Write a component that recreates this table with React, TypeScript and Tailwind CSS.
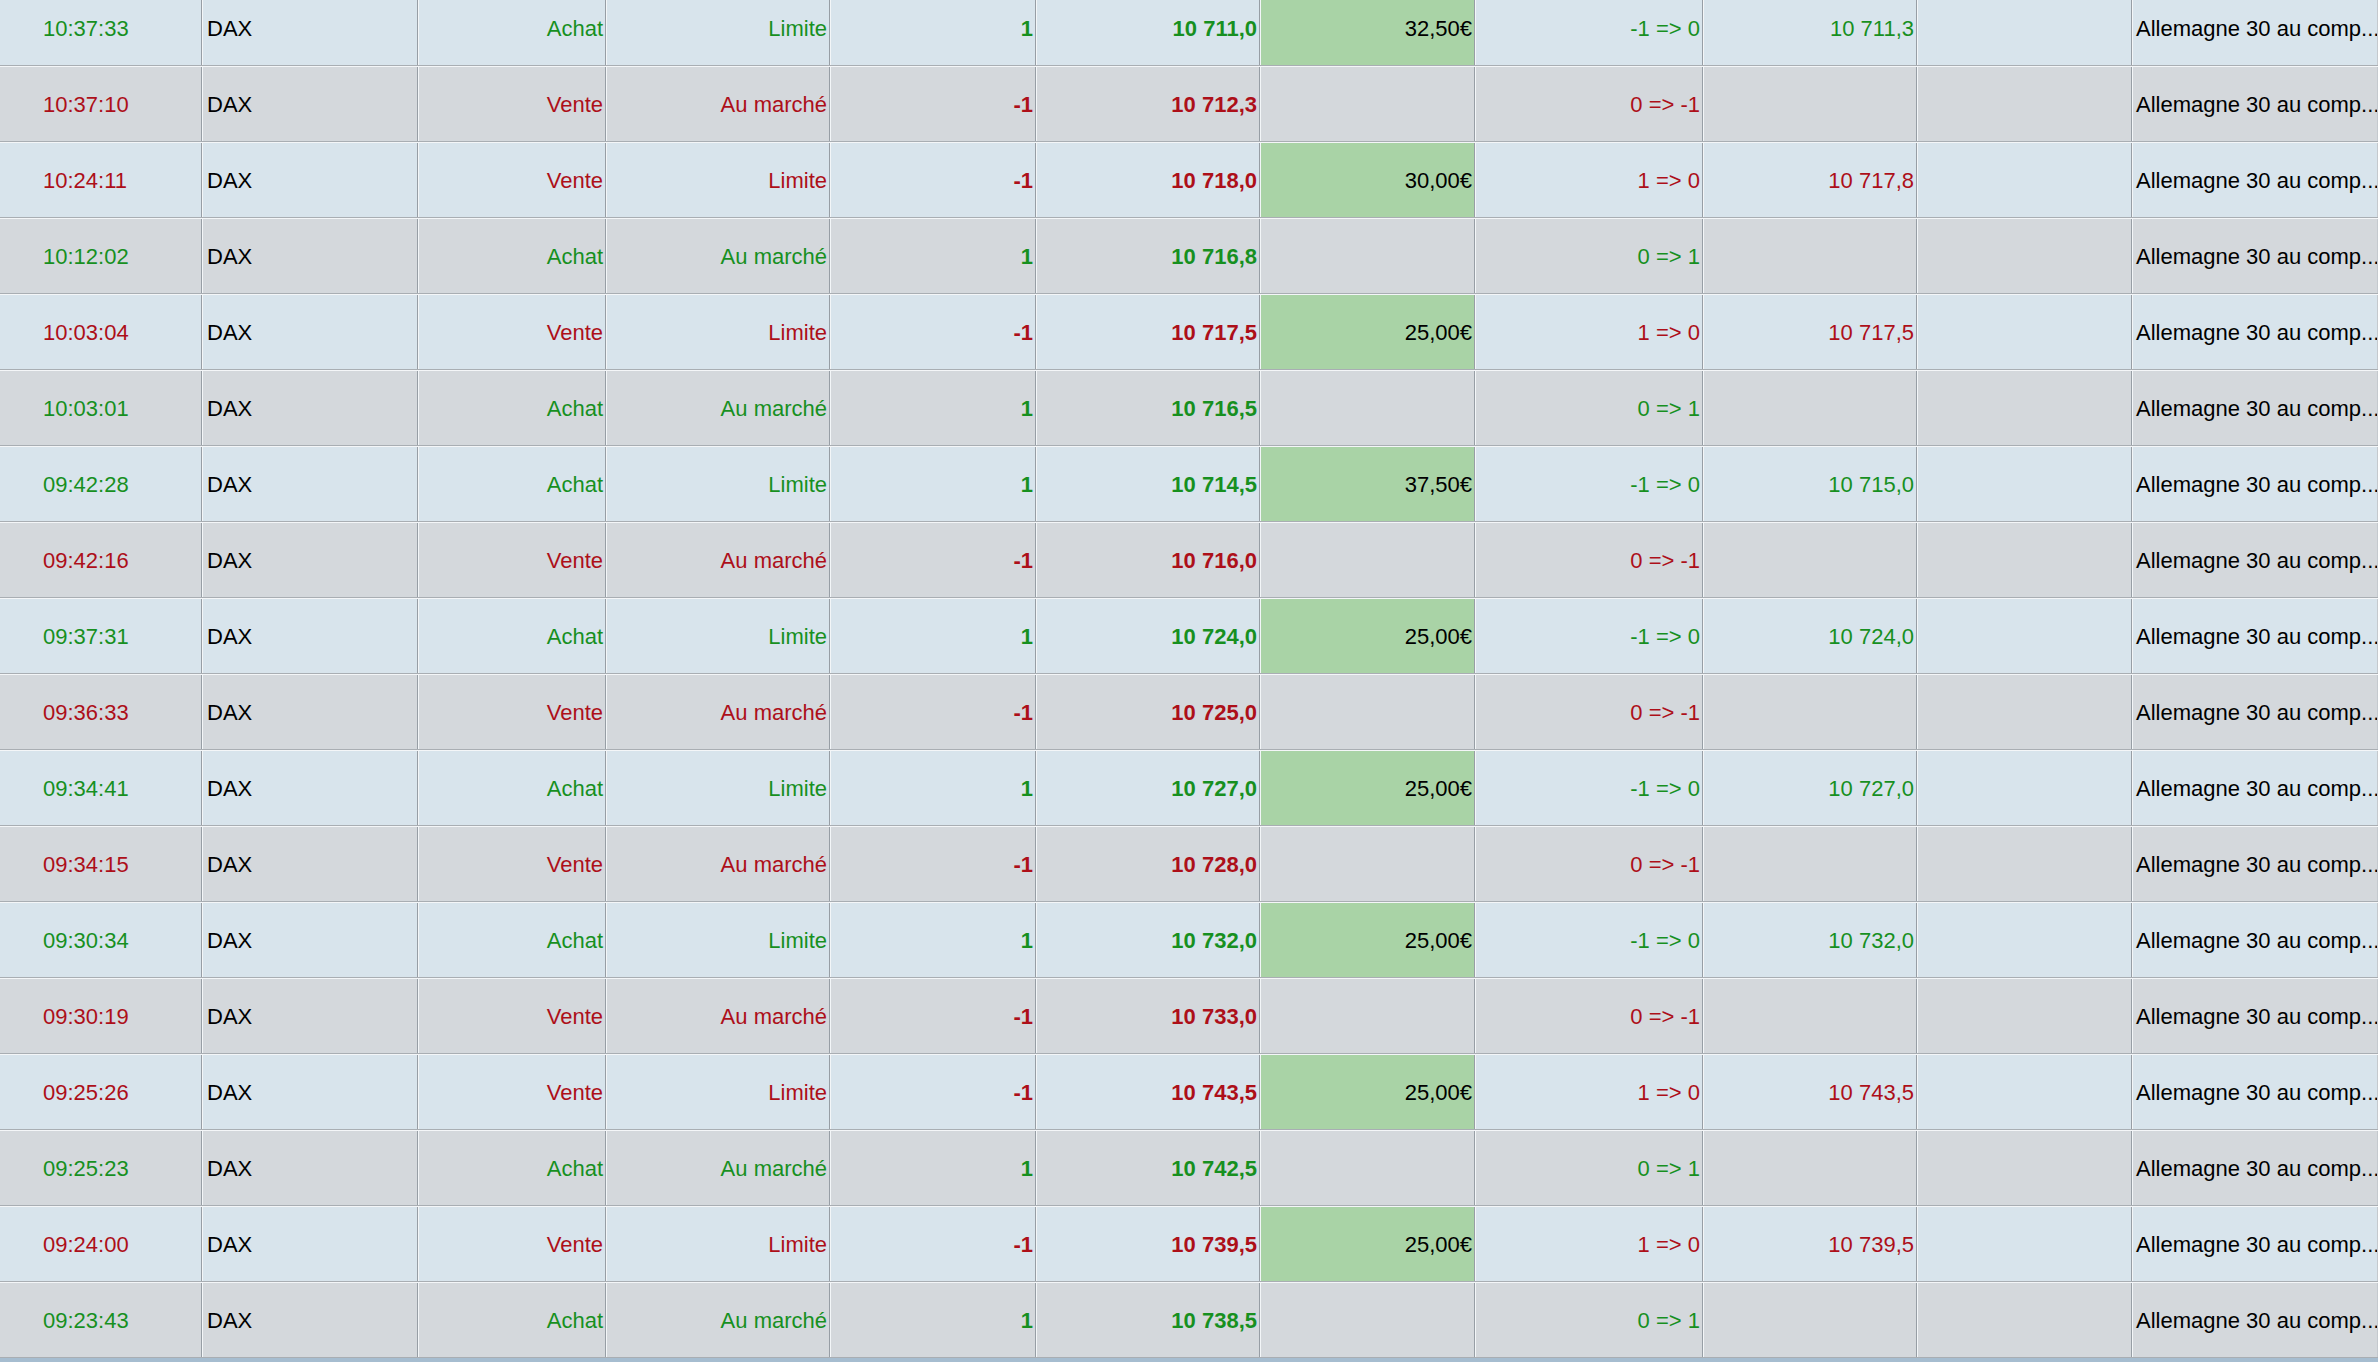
type Side = 'buy' | 'sell';

type Trade = {
  time: string;
  side: Side;
  type: string;
  qty: string;
  price: string;
  gain?: string;
  pos: string;
  posSide: Side;
  close?: string;
};

const trades: Trade[] = [
  { time: '10:37:33', side: 'buy', type: 'Limite', qty: '1', price: '10 711,0', gain: '32,50€', pos: '-1 => 0', posSide: 'buy', close: '10 711,3' },
  { time: '10:37:10', side: 'sell', type: 'Au marché', qty: '-1', price: '10 712,3', pos: '0 => -1', posSide: 'sell' },
  { time: '10:24:11', side: 'sell', type: 'Limite', qty: '-1', price: '10 718,0', gain: '30,00€', pos: '1 => 0', posSide: 'sell', close: '10 717,8' },
  { time: '10:12:02', side: 'buy', type: 'Au marché', qty: '1', price: '10 716,8', pos: '0 => 1', posSide: 'buy' },
  { time: '10:03:04', side: 'sell', type: 'Limite', qty: '-1', price: '10 717,5', gain: '25,00€', pos: '1 => 0', posSide: 'sell', close: '10 717,5' },
  { time: '10:03:01', side: 'buy', type: 'Au marché', qty: '1', price: '10 716,5', pos: '0 => 1', posSide: 'buy' },
  { time: '09:42:28', side: 'buy', type: 'Limite', qty: '1', price: '10 714,5', gain: '37,50€', pos: '-1 => 0', posSide: 'buy', close: '10 715,0' },
  { time: '09:42:16', side: 'sell', type: 'Au marché', qty: '-1', price: '10 716,0', pos: '0 => -1', posSide: 'sell' },
  { time: '09:37:31', side: 'buy', type: 'Limite', qty: '1', price: '10 724,0', gain: '25,00€', pos: '-1 => 0', posSide: 'buy', close: '10 724,0' },
  { time: '09:36:33', side: 'sell', type: 'Au marché', qty: '-1', price: '10 725,0', pos: '0 => -1', posSide: 'sell' },
  { time: '09:34:41', side: 'buy', type: 'Limite', qty: '1', price: '10 727,0', gain: '25,00€', pos: '-1 => 0', posSide: 'buy', close: '10 727,0' },
  { time: '09:34:15', side: 'sell', type: 'Au marché', qty: '-1', price: '10 728,0', pos: '0 => -1', posSide: 'sell' },
  { time: '09:30:34', side: 'buy', type: 'Limite', qty: '1', price: '10 732,0', gain: '25,00€', pos: '-1 => 0', posSide: 'buy', close: '10 732,0' },
  { time: '09:30:19', side: 'sell', type: 'Au marché', qty: '-1', price: '10 733,0', pos: '0 => -1', posSide: 'sell' },
  { time: '09:25:26', side: 'sell', type: 'Limite', qty: '-1', price: '10 743,5', gain: '25,00€', pos: '1 => 0', posSide: 'sell', close: '10 743,5' },
  { time: '09:25:23', side: 'buy', type: 'Au marché', qty: '1', price: '10 742,5', pos: '0 => 1', posSide: 'buy' },
  { time: '09:24:00', side: 'sell', type: 'Limite', qty: '-1', price: '10 739,5', gain: '25,00€', pos: '1 => 0', posSide: 'sell', close: '10 739,5' },
  { time: '09:23:43', side: 'buy', type: 'Au marché', qty: '1', price: '10 738,5', pos: '0 => 1', posSide: 'buy' },
];

const tone = (s: Side) => (s === 'buy' ? 'text-[#17901f]' : 'text-[#ad0f19]');

const Cell = ({
  children,
  className = '',
  first = false,
}: {
  children?: React.ReactNode;
  className?: string;
  first?: boolean;
}) => (
  <div
    className={`flex items-center whitespace-nowrap overflow-hidden border-r border-r-[#979ea5] ${
      first ? '' : 'border-l border-l-[#f3f6f8]'
    } ${className}`}
  >
    {children}
  </div>
);

const App = () => {
  return (
    <div
      className="h-[1362px] w-[2378px] overflow-hidden bg-[#a6bdd0] text-[22px] text-black"
      style={{ fontFamily: '"Liberation Sans", Arial, sans-serif' }}
    >
      <div className="-mt-[10px]">
        {trades.map((t, i) => (
          <div
            key={t.time}
            className={`grid h-[76px] grid-cols-[202px_216px_188px_224px_206px_224px_215px_228px_214px_215px_1fr] border-t border-t-[#f4f6f8] border-b border-b-[#a9aeb3] ${
              i % 2 === 0 ? 'bg-[#d8e4ec]' : 'bg-[#d4d8dc]'
            }`}
          >
            <Cell first className={`pl-[43px] ${tone(t.side)}`}>{t.time}</Cell>
            <Cell className="pl-[4px]">DAX</Cell>
            <Cell className={`justify-end pr-[2px] ${tone(t.side)}`}>
              {t.side === 'buy' ? 'Achat' : 'Vente'}
            </Cell>
            <Cell className={`justify-end pr-[2px] ${tone(t.side)}`}>{t.type}</Cell>
            <Cell className={`justify-end pr-[2px] font-bold ${tone(t.side)}`}>{t.qty}</Cell>
            <Cell className={`justify-end pr-[2px] font-bold ${tone(t.side)}`}>{t.price}</Cell>
            <Cell className={`justify-end pr-[2px] ${t.gain ? 'bg-[#a9d3a6]' : ''}`}>{t.gain}</Cell>
            <Cell className={`justify-end pr-[2px] ${tone(t.posSide)}`}>{t.pos}</Cell>
            <Cell className={`justify-end pr-[2px] ${tone(t.posSide)}`}>{t.close}</Cell>
            <Cell />
            <Cell className="pl-[3px] border-r-[#c4c9ce]">Allemagne 30 au comp...</Cell>
          </div>
        ))}
      </div>
    </div>
  );
};

export default App;
